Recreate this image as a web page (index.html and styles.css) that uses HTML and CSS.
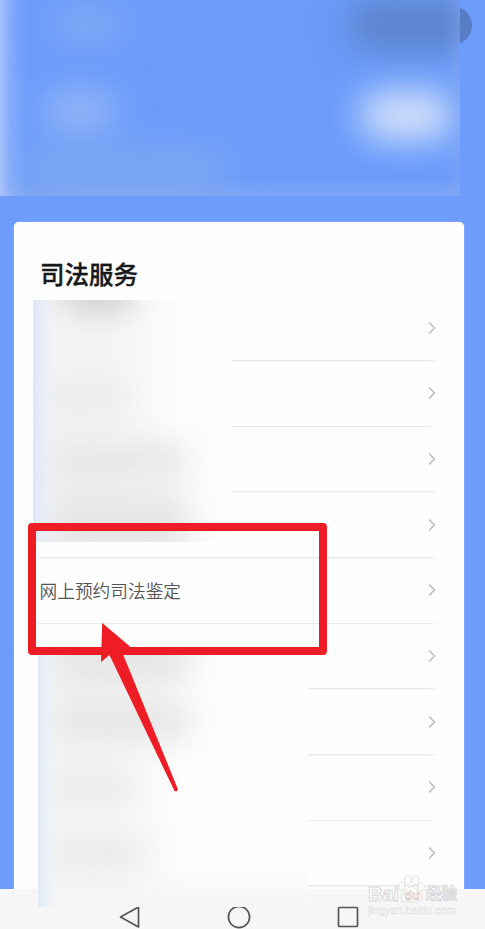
FILE: index.html
```html
<!DOCTYPE html>
<html lang="zh-CN">
<head>
  <meta charset="UTF-8" />
  <meta name="viewport" content="width=device-width, initial-scale=1.0"/>
  <title>司法服务</title>
  <link rel="stylesheet" href="styles.css">
</head>
<body>
  <div class="screen">
    <header class="top">
      <div class="capsule"></div>
      <div class="top-blur">
        <i class="spot spot-menu"></i>
        <i class="spot spot-button"></i>
        <i class="spot spot-time"></i>
        <i class="spot spot-title"></i>
        <i class="spot spot-text"></i>
      </div>
    </header>

    <main class="card">
      <h2>司法服务</h2>
      <ul class="list">
        <li><span></span><svg class="arrow" viewBox="0 0 8 12"><path d="M1 .5l5.500 5.500-5.500 5.500"/></svg></li>
        <li><span></span><svg class="arrow" viewBox="0 0 8 12"><path d="M1 .5l5.500 5.500-5.500 5.500"/></svg></li>
        <li><span></span><svg class="arrow" viewBox="0 0 8 12"><path d="M1 .5l5.500 5.500-5.500 5.500"/></svg></li>
        <li><span></span><svg class="arrow" viewBox="0 0 8 12"><path d="M1 .5l5.500 5.500-5.500 5.500"/></svg></li>
        <li><span>网上预约司法鉴定</span><svg class="arrow" viewBox="0 0 8 12"><path d="M1 .5l5.500 5.500-5.500 5.500"/></svg></li>
        <li><span></span><svg class="arrow" viewBox="0 0 8 12"><path d="M1 .5l5.500 5.500-5.500 5.500"/></svg></li>
        <li><span></span><svg class="arrow" viewBox="0 0 8 12"><path d="M1 .5l5.500 5.500-5.500 5.500"/></svg></li>
        <li><span></span><svg class="arrow" viewBox="0 0 8 12"><path d="M1 .5l5.500 5.500-5.500 5.500"/></svg></li>
        <li><span></span><svg class="arrow" viewBox="0 0 8 12"><path d="M1 .5l5.500 5.500-5.500 5.500"/></svg></li>
      </ul>
    </main>

    <!-- Android navigation keys -->
    <nav class="keys">
      <svg viewBox="0 0 24 24"><path d="M20.500 2v20L2.500 12z"/></svg>
      <svg viewBox="0 0 24 24"><circle cx="12" cy="12" r="10.600"/></svg>
      <svg viewBox="0 0 24 24"><rect x="2.500" y="2.500" width="19" height="19" rx="1"/></svg>
    </nav>

    <!-- Hidden list entries -->
    <div class="smudge smudge-top">
      <i class="spot row-1"></i>
      <i class="spot row-2"></i>
      <i class="spot row-3"></i>
      <i class="spot row-4"></i>
    </div>
    <div class="smudge smudge-bottom">
      <i class="spot row-6"></i>
      <i class="spot row-7"></i>
      <i class="spot row-8"></i>
      <i class="spot row-9"></i>
    </div>

    <!-- Highlight box and pointer -->
    <div class="highlight"></div>
    <svg class="pointer" viewBox="0 0 80 172">
      <path d="M2.200 2L30 25.500 22.500 32 77.800 168Q77.500 171.500 74.500 170L9.500 34 1 41z"/>
    </svg>

    <div class="watermark">
      <div class="brand">
        <b>Bai</b>
        <svg viewBox="0 0 28 30">
          <ellipse cx="4" cy="12" rx="3.300" ry="4.300"/>
          <ellipse cx="10" cy="5.500" rx="3.300" ry="4.500"/>
          <ellipse cx="18" cy="5.800" rx="3.300" ry="4.500"/>
          <ellipse cx="24" cy="13" rx="3.300" ry="4.300"/>
          <path d="M14 12.500c-5 0-5 5-9 8-3 3-1.500 8 3 8h12c4.500 0 6-5 3-8-4-3-4-8-9-8z"/>
          <text x="6.500" y="26">du</text>
        </svg>
        <b class="cn">经验</b>
      </div>
      <div class="site">jingyan.baidu.com</div>
    </div>
  </div>
</body>
</html>
```
FILE: styles.css
```css
* {
  box-sizing: border-box;
  margin: 0;
  padding: 0;
}

body {
  background: #6d9cfc;
  font-family: "Noto Sans CJK SC", sans-serif;
}

.screen {
  position: relative;
  display: flex;
  flex-direction: column;
  width: 485px;
  height: 929px;
  overflow: hidden;
}

/* Header */
.top {
  position: relative;
  height: 222px;
  flex: none;
}

.capsule {
  position: absolute;
  top: 6px;
  right: 13px;
  width: 100px;
  height: 39px;
  border-radius: 20px;
  background: #577dc4;
}

.top-blur {
  position: absolute;
  top: 0;
  left: 0;
  width: 460px;
  height: 196px;
  overflow: hidden;
  background: #6b9cfb;
}

.top-blur::after {
  content: "";
  position: absolute;
  inset: 0;
  background:
    linear-gradient(90deg, rgba(190, 208, 250, .7), rgba(170, 196, 250, .35) 11px, rgba(150, 180, 245, 0) 28px),
    linear-gradient(270deg, rgba(140, 170, 240, .35), rgba(140, 170, 240, 0) 16px),
    linear-gradient(0deg, rgba(140, 172, 240, .6), rgba(140, 172, 240, 0) 18px);
}

/* Soft spots */
.spot {
  position: absolute;
  border-radius: 20px;
  filter: blur(18px);
}

.spot-menu {
  left: 348px;
  top: 2px;
  width: 132px;
  height: 46px;
  background: #5b80c4;
}

.spot-button {
  left: 361px;
  top: 92px;
  width: 92px;
  height: 47px;
  background: #d9e5fb;
}

.spot-time {
  left: 50px;
  top: 12px;
  width: 75px;
  height: 27px;
  background: #8aadf1;
}

.spot-title {
  left: 42px;
  top: 90px;
  width: 76px;
  height: 44px;
  background: #97b6f6;
}

.spot-text {
  left: 20px;
  top: 147px;
  width: 210px;
  height: 45px;
  background: #7ea7f2;
}

/* Service list */
.card {
  height: 667px;
  flex: none;
  margin: 0 21px 0 14px;
  padding: 33px 26px 0 24px;
  background: #fefefe;
  border-radius: 5px 5px 0 0;
  box-shadow: 0 0 1px #fff;
}

h2 {
  height: 41px;
  padding-left: 2px;
  font-size: 24.500px;
  line-height: 38px;
  font-weight: 500;
  -webkit-text-stroke: .35px #18191b;
  color: #18191b;
}

.list {
  list-style: none;
  height: 591px;
  display: grid;
  grid-template-rows: repeat(9, 1fr);
}

.list li {
  display: flex;
  align-items: center;
  justify-content: space-between;
  padding: 0 2px 2px 1.500px;
  background: linear-gradient(90deg, #e7e9eb 390px, #fefefe) bottom / 100% 1.500px no-repeat;
}

.list span {
  font-size: 17.700px;
  font-weight: 350;
  line-height: 26px;
  color: #555;
}

.arrow {
  width: 8px;
  height: 12px;
  overflow: visible;
  fill: none;
  stroke: #b9b9b9;
  stroke-width: 1.400;
}

/* Bottom keys */
.keys {
  flex: 1;
  display: flex;
  justify-content: center;
  gap: 85px;
  padding: 15.500px 7px 0 0;
  background: #f6f6f7;
}

.keys svg {
  width: 24px;
  height: 24px;
  fill: none;
  stroke: #555;
  stroke-width: 1.700;
  stroke-linejoin: round;
}

.smudge {
  position: absolute;
  overflow: hidden;
}

.smudge .spot {
  background: #e6e6e6;
  filter: blur(15px);
}

.smudge::after {
  content: "";
  position: absolute;
  inset: 0;
  background: linear-gradient(90deg, #dce6fa, rgba(228, 235, 248, .8) 8px, rgba(245, 247, 249, 0) 20px);
}

.smudge-top {
  left: 33px;
  top: 300px;
  width: 199px;
  height: 242px;
  background: linear-gradient(90deg, #f3f4f4, #f4f4f4 75px, #fdfdfd 150px);
}

.smudge-top .row-1 {
  left: 30px;
  top: -25px;
  width: 70px;
  height: 35px;
  background: #cbcbcb;
}

.row-2 {
  left: 15px;
  top: 86px;
  width: 80px;
  height: 20px;
}

.row-3 {
  left: 15px;
  top: 142px;
  width: 142px;
  height: 36px;
}

.row-4 {
  left: 15px;
  top: 190px;
  width: 142px;
  height: 70px;
}

.smudge-bottom {
  left: 38px;
  top: 650px;
  width: 270px;
  height: 257px;
  background:
    linear-gradient(0deg, #f4f5f5, rgba(247, 247, 248, 0) 42px),
    linear-gradient(90deg, #f4f5f5, #f5f5f5 65px, #fdfdfd 150px);
}

.smudge-bottom::after {
  background: linear-gradient(90deg, #e1eaf6, rgba(232, 239, 248, .7) 8px, rgba(245, 247, 249, 0) 17px);
}

.row-6 {
  left: 15px;
  top: -20px;
  width: 138px;
  height: 55px;
}

.row-7 {
  left: 15px;
  top: 50px;
  width: 138px;
  height: 42px;
}

.row-8 {
  left: 15px;
  top: 127px;
  width: 80px;
  height: 22px;
}

.row-9 {
  left: 15px;
  top: 192px;
  width: 95px;
  height: 22px;
}

.highlight {
  position: absolute;
  left: 28px;
  top: 523px;
  width: 299px;
  height: 132px;
  border: 8px solid #ee1c24;
  border-radius: 4px;
}

.pointer {
  position: absolute;
  left: 100px;
  top: 621px;
  width: 80px;
  height: 172px;
  fill: #ee1c24;
}

/* Watermark */
.watermark {
  position: absolute;
  left: 368px;
  top: 874px;
  font-family: "Liberation Sans", "Noto Sans CJK SC", sans-serif;
  color: rgba(255, 255, 255, .8);
  -webkit-text-stroke: .8px #d3d4d5;
}

.brand {
  display: flex;
  align-items: flex-end;
  height: 30px;
}

.brand b {
  width: 30px;
  font-size: 20px;
  line-height: 20px;
}

.brand .cn {
  margin-left: 1px;
  font-size: 15.500px;
  white-space: nowrap;
}

.brand svg {
  width: 27px;
  height: 30px;
  fill: rgba(255, 255, 255, .8);
  stroke: #d5d6d7;
  stroke-width: .8;
}

.brand text {
  font-size: 13px;
  font-weight: bold;
  stroke: #cccdce;
  -webkit-text-stroke: 0;
}

.site {
  font-size: 10.900px;
  line-height: 13px;
  color: #fafafa;
  -webkit-text-stroke: .4px #d9dadb;
}
```
